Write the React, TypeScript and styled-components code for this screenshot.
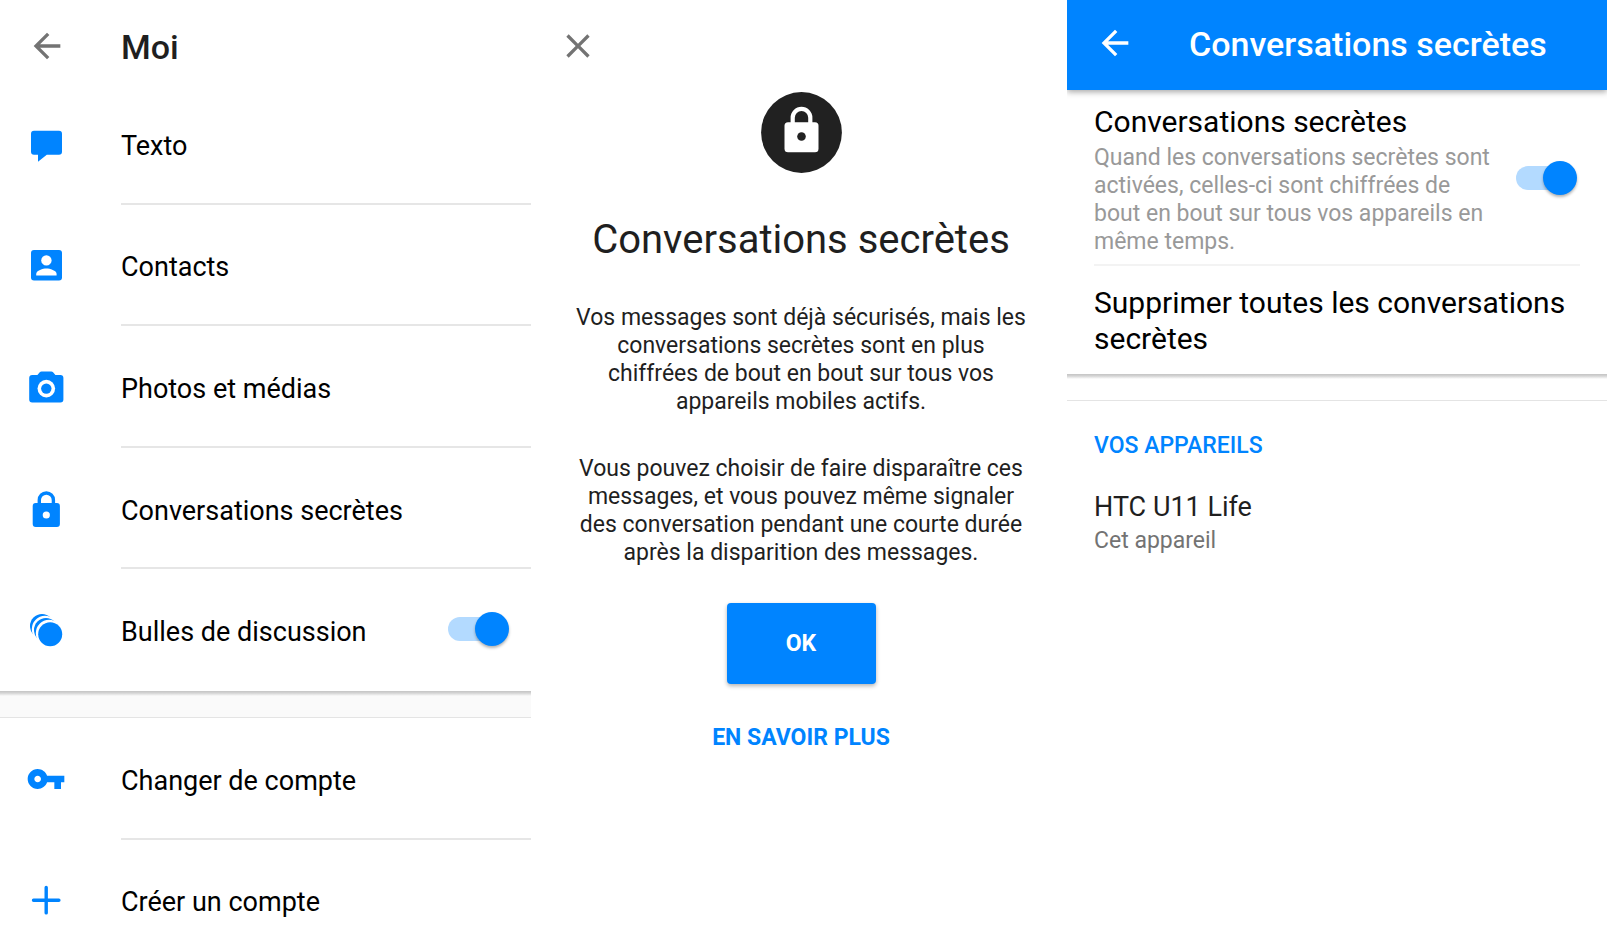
import React from "react";
import styled, { createGlobalStyle } from "styled-components";

const BLUE = "#0084ff";

const GlobalStyle = createGlobalStyle`
  *, *::before, *::after { box-sizing: border-box; }
  body { margin: 0; background: #fff; color: #000; font-family: Roboto, "Liberation Sans", sans-serif; }
  h1, h2, h3, p, ul { margin: 0; padding: 0; font-weight: 400; }
  ul { list-style: none; }
  button { border: 0; padding: 0; background: none; color: inherit; font: inherit; cursor: pointer; }
`;

const Screens = styled.div`
  display: grid;
  grid-template-columns: 531fr 536fr 540fr;
  height: 100vh;
`;

const Panel = styled.section`
  min-width: 0;
  overflow-y: auto;
  scrollbar-width: none;
  background: #fff;
`;

const TopBar = styled.header`
  display: flex;
  align-items: center;
  height: 83px;
  padding: 8px 27px 0;
  color: #1f1f1f;
`;

const BlueBar = styled(TopBar)`
  height: 90px;
  padding: 0 28px 4px;
  background: ${BLUE};
  color: #fff;
  box-shadow: 0 2px 6px rgba(0, 0, 0, 0.35);
`;

const IconButton = styled.button<{ $tone: string }>`
  display: flex;
  flex: none;
  color: ${(p) => p.$tone};
`;

const BarTitle = styled.h1`
  padding: 2px 0 0 54px;
  font-size: 34px;
  line-height: 40px;
  font-weight: 500;
  white-space: nowrap;
`;

const Menu = styled.ul<{ $height: number }>`
  display: grid;
  grid-auto-rows: 1fr;
  height: ${(p) => p.$height}px;
`;

const MenuContent = styled.span`
  display: flex;
  flex: 1;
  align-items: center;
  align-self: stretch;
  justify-content: space-between;
  padding-right: 22px;
  border-bottom: 2px solid #e6e6e6;
`;

const MenuItem = styled.li`
  display: flex;
  padding-left: 26px;
  color: ${BLUE};

  & > button, & > label {
    display: flex;
    flex: 1;
    align-items: center;
    gap: 55px;
    text-align: left;
    cursor: pointer;
  }

  &:last-child ${MenuContent} { border-color: transparent; }
`;

const MenuText = styled.span`
  padding-top: 6px;
  color: #000;
  font-size: 27px;
  line-height: 32px;
`;

const Separator = styled.div<{ $fill: string }>`
  height: 27px;
  border-bottom: 1px solid #e4e4e4;
  background: linear-gradient(#c4c4c4, #d4d4d4 2px, ${(p) => p.$fill} 5px);
`;

const Switch = styled.input`
  appearance: none;
  flex: none;
  display: grid;
  align-items: center;
  width: 61px;
  height: 34px;
  margin: 0;
  cursor: pointer;

  &::before, &::after {
    content: "";
    grid-area: 1 / 1;
  }

  &::before {
    width: 54px;
    height: 24px;
    border-radius: 12px;
    background: #b3daff;
  }

  &::after {
    justify-self: end;
    width: 34px;
    height: 34px;
    border-radius: 50%;
    background: ${BLUE};
    box-shadow: 0 2px 3px rgba(0, 0, 0, 0.3);
  }

  &:not(:checked)::after { justify-self: start; }
`;

const Intro = styled.div`
  display: flex;
  flex-direction: column;
  align-items: center;
  padding: 9px 34px 40px 38px;
  color: #1f1f1f;
  text-align: center;
`;

const IntroTitle = styled.h2`
  margin-top: 42px;
  font-size: 40px;
  line-height: 50px;
  white-space: nowrap;
`;

const IntroText = styled.p`
  margin-top: 39px;
  max-width: 456px;
  font-size: 23px;
  line-height: 28px;
`;

const PrimaryButton = styled.button`
  width: 149px;
  height: 81px;
  margin-top: 36px;
  border-radius: 4px;
  background: ${BLUE};
  color: #fff;
  font-size: 23px;
  font-weight: 700;
  box-shadow: 0 2px 4px rgba(0, 0, 0, 0.3);
`;

const MoreLink = styled.a`
  margin-top: 40px;
  color: ${BLUE};
  font-size: 23px;
  line-height: 28px;
  font-weight: 700;
  text-decoration: none;
`;

const Setting = styled.label`
  display: flex;
  align-items: center;
  justify-content: space-between;
  margin: 0 27px;
  padding: 9px 3px 8px 0;
  border-bottom: 2px solid #f3f3f3;
  cursor: pointer;
`;

const SettingText = styled.span`
  display: flex;
  flex-direction: column;
  gap: 4px;
  max-width: 402px;
  padding-top: 5px;
`;

const SettingName = styled.span`
  display: block;
  font-size: 30px;
  line-height: 36px;
`;

const Hint = styled.span<{ $tone: string }>`
  display: block;
  color: ${(p) => p.$tone};
  font-size: 23px;
  line-height: 28px;
`;

const DeleteButton = styled.button`
  display: block;
  width: 100%;
  padding: 19px 27px 17px;
  text-align: left;
`;

const Devices = styled.div`
  padding: 31px 27px;
`;

const DevicesTitle = styled.h2`
  color: ${BLUE};
  font-size: 23px;
  line-height: 28px;
  font-weight: 500;
`;

const DeviceName = styled.h3`
  margin: 31px 0 4px;
  color: #1f1f1f;
  font-size: 27px;
  line-height: 32px;
`;

const Badge = styled.svg`
  display: block;
  width: 81px;
  height: 81px;
`;

const IconSvg = styled.svg`
  display: block;
  flex: none;
  width: 40px;
  height: 40px;
  fill: currentColor;
`;

const BackIcon = () => (
  <IconSvg viewBox="0 0 24 24" aria-hidden="true">
    <path d="M20 11H7.83l5.59-5.59L12 4l-8 8 8 8 1.41-1.41L7.83 13H20v-2z" />
  </IconSvg>
);

const CloseIcon = () => (
  <IconSvg viewBox="0 0 24 24" aria-hidden="true">
    <path d="M19 6.41 17.59 5 12 10.59 6.41 5 5 6.41 10.59 12 5 17.59 6.41 19 12 13.41 17.59 19 19 17.59 13.41 12z" />
  </IconSvg>
);

const ChatIcon = () => (
  <IconSvg viewBox="0 0 40 40" aria-hidden="true">
    <path d="M8 6.800h25a3 3 0 0 1 3 3v18a3 3 0 0 1-3 3H20.800L12 37.800v-7H8a3 3 0 0 1-3-3v-18a3 3 0 0 1 3-3z" />
  </IconSvg>
);

const ContactIcon = () => (
  <IconSvg viewBox="0 0 40 40" aria-hidden="true">
    <rect x="5" y="5" width="31" height="30.6" rx="3" />
    <circle cx="20.4" cy="15.4" r="5.2" fill="#fff" />
    <path d="M10.2 30.6v-1.7c0-3.5 6.8-5.4 10.2-5.4s10.2 1.9 10.2 5.4v1.7z" fill="#fff" />
  </IconSvg>
);

const CameraIcon = () => (
  <IconSvg viewBox="0 0 40 40" aria-hidden="true">
    <path d="M15.6 4.6h9.6c.9 0 1.5.3 2.1 1l2.1 2.4h5a3 3 0 0 1 3 3v21.4a3 3 0 0 1-3 3H6.200a3 3 0 0 1-3-3V11a3 3 0 0 1 3-3h5.2l2.1-2.400c.6-.7 1.2-1 2.1-1z" />
    <circle cx="20.3" cy="21.6" r="8.8" fill="#fff" />
    <circle cx="20.3" cy="21.6" r="5.2" />
  </IconSvg>
);

const LockIcon = () => (
  <IconSvg viewBox="0 0 40 40" aria-hidden="true">
    <rect x="6.7" y="14" width="27.2" height="24" rx="3" />
    <path d="M13.3 15v-4a7.05 7.05 0 0 1 14.1 0v4" fill="none" stroke="currentColor" strokeWidth="3.4" />
    <circle cx="20.3" cy="26" r="3.6" fill="#fff" />
  </IconSvg>
);

const BubblesIcon = () => (
  <IconSvg viewBox="0 0 40 40" aria-hidden="true">
    <circle cx="16" cy="16" r="12" />
    <circle cx="19" cy="19" r="13.2" fill="#fff" />
    <circle cx="20" cy="20" r="12" />
    <circle cx="23" cy="23" r="13.2" fill="#fff" />
    <circle cx="24.2" cy="24.2" r="12" />
  </IconSvg>
);

const KeyIcon = () => (
  <IconSvg viewBox="0 0 24 24" aria-hidden="true">
    <path d="M12.65 10C11.83 7.67 9.61 6 7 6c-3.31 0-6 2.69-6 6s2.69 6 6 6c2.61 0 4.83-1.67 5.65-4H17v4h4v-4h2v-4H12.65zM7 14c-1.1 0-2-.9-2-2s.9-2 2-2 2 .9 2 2-.9 2-2 2z" />
  </IconSvg>
);

const PlusIcon = () => (
  <IconSvg viewBox="0 0 40 40" aria-hidden="true">
    <path d="M20.2 7.5v25.400M7.5 20.2h25.400" fill="none" stroke="currentColor" strokeWidth="3.4" strokeLinecap="round" />
  </IconSvg>
);

const LockBadge = () => (
  <Badge viewBox="0 0 81 81" aria-hidden="true">
    <circle cx="40.5" cy="40.5" r="40.4" fill="#212121" />
    <rect x="23.5" y="30.2" width="34" height="30" rx="3.5" fill="#fff" />
    <path d="M31.7 31v-5.3a8.8 8.8 0 0 1 17.6 0V31" fill="none" stroke="#fff" strokeWidth="4.2" />
    <circle cx="40.5" cy="44.5" r="4.3" fill="#212121" />
  </Badge>
);

interface Entry {
  label: string;
  Icon: React.FC;
  toggle?: boolean;
}

const mainEntries: Entry[] = [
  { label: "Texto", Icon: ChatIcon },
  { label: "Contacts", Icon: ContactIcon },
  { label: "Photos et médias", Icon: CameraIcon },
  { label: "Conversations secrètes", Icon: LockIcon },
  { label: "Bulles de discussion", Icon: BubblesIcon, toggle: true },
];

const accountEntries: Entry[] = [
  { label: "Changer de compte", Icon: KeyIcon },
  { label: "Créer un compte", Icon: PlusIcon },
];

const MenuRow = ({ label, Icon, toggle }: Entry) => {
  const inner = (
    <>
      <Icon />
      <MenuContent>
        <MenuText>{label}</MenuText>
        {toggle && <Switch type="checkbox" role="switch" defaultChecked />}
      </MenuContent>
    </>
  );
  return <MenuItem>{toggle ? <label>{inner}</label> : <button type="button">{inner}</button>}</MenuItem>;
};

export default function App() {
  return (
    <>
      <GlobalStyle />
      <Screens>
        <Panel>
          <TopBar>
            <IconButton type="button" aria-label="Retour" $tone="#737373"><BackIcon /></IconButton>
            <BarTitle>Moi</BarTitle>
          </TopBar>
          <Menu $height={608}>
            {mainEntries.map((e) => <MenuRow key={e.label} {...e} />)}
          </Menu>
          <Separator $fill="#fafafa" />
          <Menu $height={243}>
            {accountEntries.map((e) => <MenuRow key={e.label} {...e} />)}
          </Menu>
        </Panel>

        <Panel>
          <TopBar>
            <IconButton type="button" aria-label="Fermer" $tone="#737373"><CloseIcon /></IconButton>
          </TopBar>
          <Intro>
            <LockBadge />
            <IntroTitle>Conversations secrètes</IntroTitle>
            <IntroText>
              Vos messages sont déjà sécurisés, mais les conversations secrètes sont en plus chiffrées de bout en bout sur tous vos appareils mobiles actifs.
            </IntroText>
            <IntroText>
              Vous pouvez choisir de faire disparaître ces messages, et vous pouvez même signaler des conversation pendant une courte durée après la disparition des messages.
            </IntroText>
            <PrimaryButton type="button">OK</PrimaryButton>
            <MoreLink href="#">EN SAVOIR PLUS</MoreLink>
          </Intro>
        </Panel>

        <Panel>
          <BlueBar>
            <IconButton type="button" aria-label="Retour" $tone="#fff"><BackIcon /></IconButton>
            <BarTitle>Conversations secrètes</BarTitle>
          </BlueBar>
          <Setting>
            <SettingText>
              <SettingName>Conversations secrètes</SettingName>
              <Hint $tone="#999">
                Quand les conversations secrètes sont activées, celles-ci sont chiffrées de bout en bout sur tous vos appareils en même temps.
              </Hint>
            </SettingText>
            <Switch type="checkbox" role="switch" defaultChecked />
          </Setting>
          <DeleteButton type="button">
            <SettingName>Supprimer toutes les conversations secrètes</SettingName>
          </DeleteButton>
          <Separator $fill="#fff" />
          <Devices>
            <DevicesTitle>VOS APPAREILS</DevicesTitle>
            <DeviceName>HTC U11 Life</DeviceName>
            <Hint $tone="#737373">Cet appareil</Hint>
          </Devices>
        </Panel>
      </Screens>
    </>
  );
}
